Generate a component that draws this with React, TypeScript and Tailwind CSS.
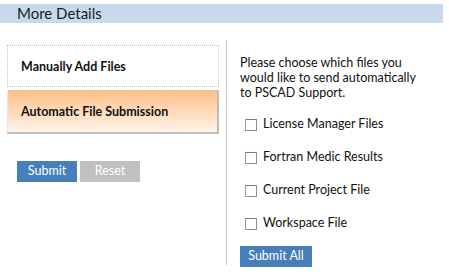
export default function App() {
  const files = [
    'License Manager Files',
    'Fortran Medic Results',
    'Current Project File',
    'Workspace File',
  ]

  return (
    <div
      className="w-[449px] h-[275px] bg-white text-[#111] overflow-hidden"
      style={{ fontFamily: 'Lato, "Open Sans", sans-serif' }}
    >
      {/* header */}
      <div className="mt-[4px] w-[443px] h-[19px] bg-[#c6daeb] flex items-center pl-[17px]">
        <span className="text-[15px] leading-none text-[#1a1a1a]">More Details</span>
      </div>

      <div className="flex mt-[17px]">
        {/* tabs */}
        <div className="w-[227px] h-[225px] border-r border-[#c8c8c8] pl-[7px] pr-[7px]">
          <div className="h-[42px] mt-[5px] border border-dotted border-[#c4c4c4] flex items-center pl-[13px] pt-[2px]">
            <span className="text-[12.5px] font-bold">Manually Add Files</span>
          </div>
          <div className="h-[44px] mt-[3px] bg-gradient-to-b from-[#fdbe86] to-[#fff4ea] border-l border-l-[#e6e6e6] border-r-2 border-b-2 border-[#bdbdbd] flex items-center pl-[13px] pt-[3px]">
            <span className="text-[12.5px] font-bold">Automatic File Submission</span>
          </div>
          <div className="flex gap-[3px] mt-[27px] pl-[10px]">
            <button className="w-[60px] h-[21px] bg-[#467fb9] text-white text-[12.5px] leading-none">
              Submit
            </button>
            <button className="w-[60px] h-[21px] bg-[#c0c0c0] text-white text-[12.5px] leading-none">
              Reset
            </button>
          </div>
        </div>

        {/* automatic panel */}
        <div className="pl-[13px] pt-[15px]">
          <p className="text-[12.5px] leading-[15px] w-[186px]">
            Please choose which files you would like to send automatically to PSCAD Support.
          </p>
          <div className="flex flex-col gap-[20px] mt-[18px] pl-[5px]">
            {files.map((f) => (
              <label key={f} className="flex items-center h-[13px] text-[12.5px]">
                <span className="w-[12px] h-[12px] border border-[#8f8f8f] border-t-[#6f7f9a] border-l-[#8a9fc0] bg-white mr-[6px]" />
                {f}
              </label>
            ))}
          </div>
          <button className="mt-[16px] w-[72px] h-[21px] bg-[#467fb9] text-white text-[12.5px] leading-none">
            Submit All
          </button>
        </div>
      </div>
    </div>
  )
}
